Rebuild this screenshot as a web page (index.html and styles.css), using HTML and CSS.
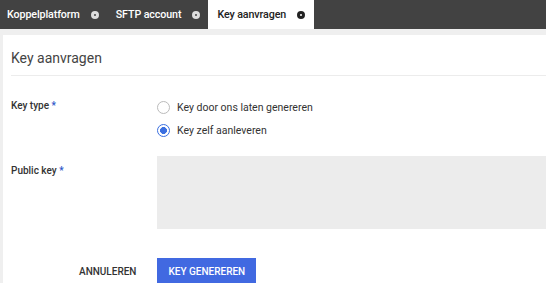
FILE: index.html
```html
<!DOCTYPE html>
<html lang="nl">
<head>
<meta charset="UTF-8" />
<meta name="viewport" content="width=device-width, initial-scale=1" />
<title>Key aanvragen</title>
<link rel="stylesheet" href="styles.css">
</head>
<body>

<nav class="tabs">
  <div class="tab first">Koppelplatform <span class="tab-close"></span></div>
  <div class="tab">SFTP account <span class="tab-close"></span></div>
  <div class="tab active">Key aanvragen <span class="tab-close"></span></div>
</nav>

<main class="page">
  <section class="card">
    <h2 class="card-title">Key aanvragen</h2>

    <div class="row">
      <div class="label">Key type <span class="req">*</span></div>
      <div class="field radios">
        <label class="radio"><span class="dot"></span>Key door ons laten genereren</label>
        <label class="radio checked"><span class="dot"></span>Key zelf aanleveren</label>
      </div>
    </div>

    <div class="row row-key">
      <div class="label">Public key <span class="req">*</span></div>
      <div class="field">
        <textarea class="keybox"></textarea>
      </div>
    </div>

    <div class="actions">
      <button type="button" class="btn-flat">Annuleren</button>
      <button type="button" class="btn-primary">Key genereren</button>
    </div>
  </section>
</main>

</body>
</html>
```

FILE: styles.css
```css
body {
  font-family: Roboto, "Liberation Sans", sans-serif;
  margin: 0; padding: 0;
  background: #fff;
  color: #333;
  overflow: hidden;
}
.tabs {
  background: #424242;
  height: 29px;
  display: flex;
}
.tab {
  display: flex;
  align-items: center;
  padding: 0 8px 0 9px;
  color: #fff;
  font-size: 10.7px;
  font-weight: 500;
  letter-spacing: -0.1px;
  white-space: nowrap;
}
.tab.first {
  padding-left: 7px;
}
.tab.active {
  background: #fff;
  color: #222;
  padding-right: 9px;
}
.tab-close {
  display: inline-block;
  box-sizing: border-box;
  width: 8px;
  height: 8px;
  margin-left: 11px;
  border-radius: 50%;
  border: 3px solid #ddd;
  background: #424242;
}
.tab.active .tab-close {
  border-color: #222;
  background: #fff;
}
.page {
  background: #efefef;
  padding: 6px 0 0 3px;
  height: 248px;
}
.card {
  background: #fff;
  height: 248px;
  padding: 0 0 0 8px;
}
.card-title {
  margin: 0;
  padding: 15px 0 0 0;
  height: 25px;
  font-size: 14px;
  font-weight: 400;
  color: #444;
  border-bottom: 1px solid #ececec;
}
.row {
  display: flex;
}
.label {
  width: 146px;
  flex: none;
  font-size: 10px;
  font-weight: 500;
  color: #333;
}
.req {
  color: #2b55c8;
}
.row .label {
  padding-top: 24px;
}
.radios {
  padding-top: 20px;
}
.radio {
  display: flex;
  align-items: center;
  height: 23px;
  font-size: 10.5px;
  color: #333;
}
.radio .dot {
  box-sizing: border-box;
  width: 13px;
  height: 13px;
  border-radius: 50%;
  border: 1px solid #bbb;
  margin-right: 7px;
  background: #fff;
}
.radio.checked .dot {
  border: 1.5px solid #3b6fe0;
  background: radial-gradient(circle, #3b6fe0 0 3.2px, #fff 3.7px);
}
.row-key {
  margin-top: 14px;
}
.row-key .label {
  padding-top: 9px;
}
.field {
  flex: 1;
}
.keybox {
  display: block;
  width: 100%;
  height: 73px;
  box-sizing: border-box;
  border: none;
  background: #ececec;
  resize: none;
}
.actions {
  display: flex;
  margin-top: 29px;
  padding-left: 58px;
  gap: 11px;
}
.actions button {
  font-family: Roboto, "Liberation Sans", sans-serif;
  font-size: 10px;
  font-weight: 500;
  text-transform: uppercase;
  height: 26px;
  border: none;
  cursor: pointer;
}
.btn-flat {
  background: none;
  color: #333;
  padding: 0 10px;
}
.btn-primary {
  background: #4169e1;
  color: #fff;
  padding: 0 11px;
}
```
